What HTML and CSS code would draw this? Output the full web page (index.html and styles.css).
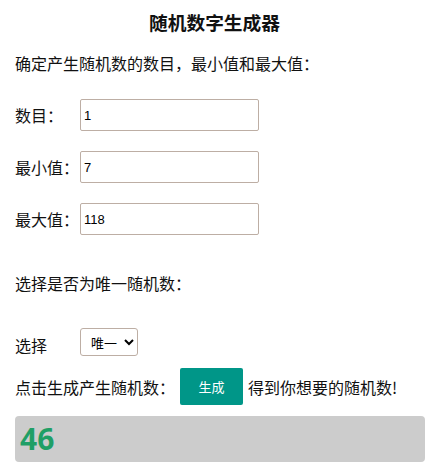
FILE: index.html
```html
<html>
<head>
<meta http-equiv="Content-Type" content="text/html; charset=UTF-8">
<link rel="stylesheet" href="styles.css">
</head>
<body>
<h3 class="title">随机数字生成器</h3>
<div class="page">
    <p class="intro">确定产生随机数的数目，最小值和最大值：</p>
    <div class="field">
        <label for="count">数目：</label>
        <input type="text" id="count" value="1">
    </div>
    <div class="field">
        <label for="min">最小值：</label>
        <input type="text" id="min" value="7">
    </div>
    <div class="field">
        <label for="max">最大值：</label>
        <input type="text" id="max" value="118">
    </div>
    <p class="intro intro--spaced">选择是否为唯一随机数：</p>
    <div class="field field--select">
        <label for="unique">选择</label>
        <select id="unique">
            <option>唯一</option>
            <option>可重复</option>
        </select>
    </div>
    <div class="action">
        <span>点击生成产生随机数：</span>
        <button class="btn">生成</button>
        <span>得到你想要的随机数!</span>
    </div>
    <div class="result">46</div>
</div>
</body>
</html>
```

FILE: styles.css
```css
body {
    margin: 0;
    font-family: "Noto Sans CJK SC", "Liberation Sans", sans-serif;
    font-size: 16px;
    color: #111;
    background: #fff;
}

.title {
    margin: 0;
    height: 44px;
    line-height: 44px;
    font-size: 18.72px;
    font-weight: bold;
    text-align: center;
}

.page {
    margin: 0 4px 0 15px;
}

.intro {
    margin: 0;
    height: 38px;
    line-height: 38px;
}
.intro--spaced {
    margin-top: 30px;
    height: 36px;
    line-height: 36px;
}

/* label + input rows */
.field {
    display: flex;
    align-items: center;
    margin-top: 20px;
    height: 32px;
}
.intro + .field {
    margin-top: 17px;
}
.field label {
    width: 65px;
    flex: none;
}
.field input {
    box-sizing: border-box;
    width: 179px;
    height: 32px;
    border: 1px solid #bdaea4;
    border-radius: 2px;
    padding: 0 3px;
    font-family: "Liberation Sans", Arial, sans-serif;
    font-size: 13px;
    color: #000;
}

.intro + .field--select {
    margin-top: 27px;
    height: 28px;
}
.field--select label {
    position: relative;
    top: 3px;
}
.field select {
    box-sizing: border-box;
    width: 58px;
    height: 28px;
    border: 1px solid #bdaea4;
    border-radius: 3px;
    background: #fff;
    font-family: "Noto Sans CJK SC", sans-serif;
    font-size: 13px;
    color: #000;
    padding-left: 6px;
}

.action {
    display: flex;
    align-items: center;
    margin-top: 12px;
    height: 37px;
}
.btn {
    box-sizing: border-box;
    width: 63px;
    height: 37px;
    margin: 0 5px 0 5px;
    border: none;
    border-radius: 2px;
    background-color: #009688;
    color: #fff;
    font-family: "Noto Sans CJK SC", sans-serif;
    font-size: 13px;
    cursor: pointer;
}

.result {
    margin-top: 11px;
    height: 46px;
    line-height: 46px;
    padding-left: 5px;
    background-color: #ccc;
    border-radius: 4px;
    color: #1f9f66;
    font-family: "Open Sans", sans-serif;
    font-weight: bold;
    font-size: 30px;
}
```
